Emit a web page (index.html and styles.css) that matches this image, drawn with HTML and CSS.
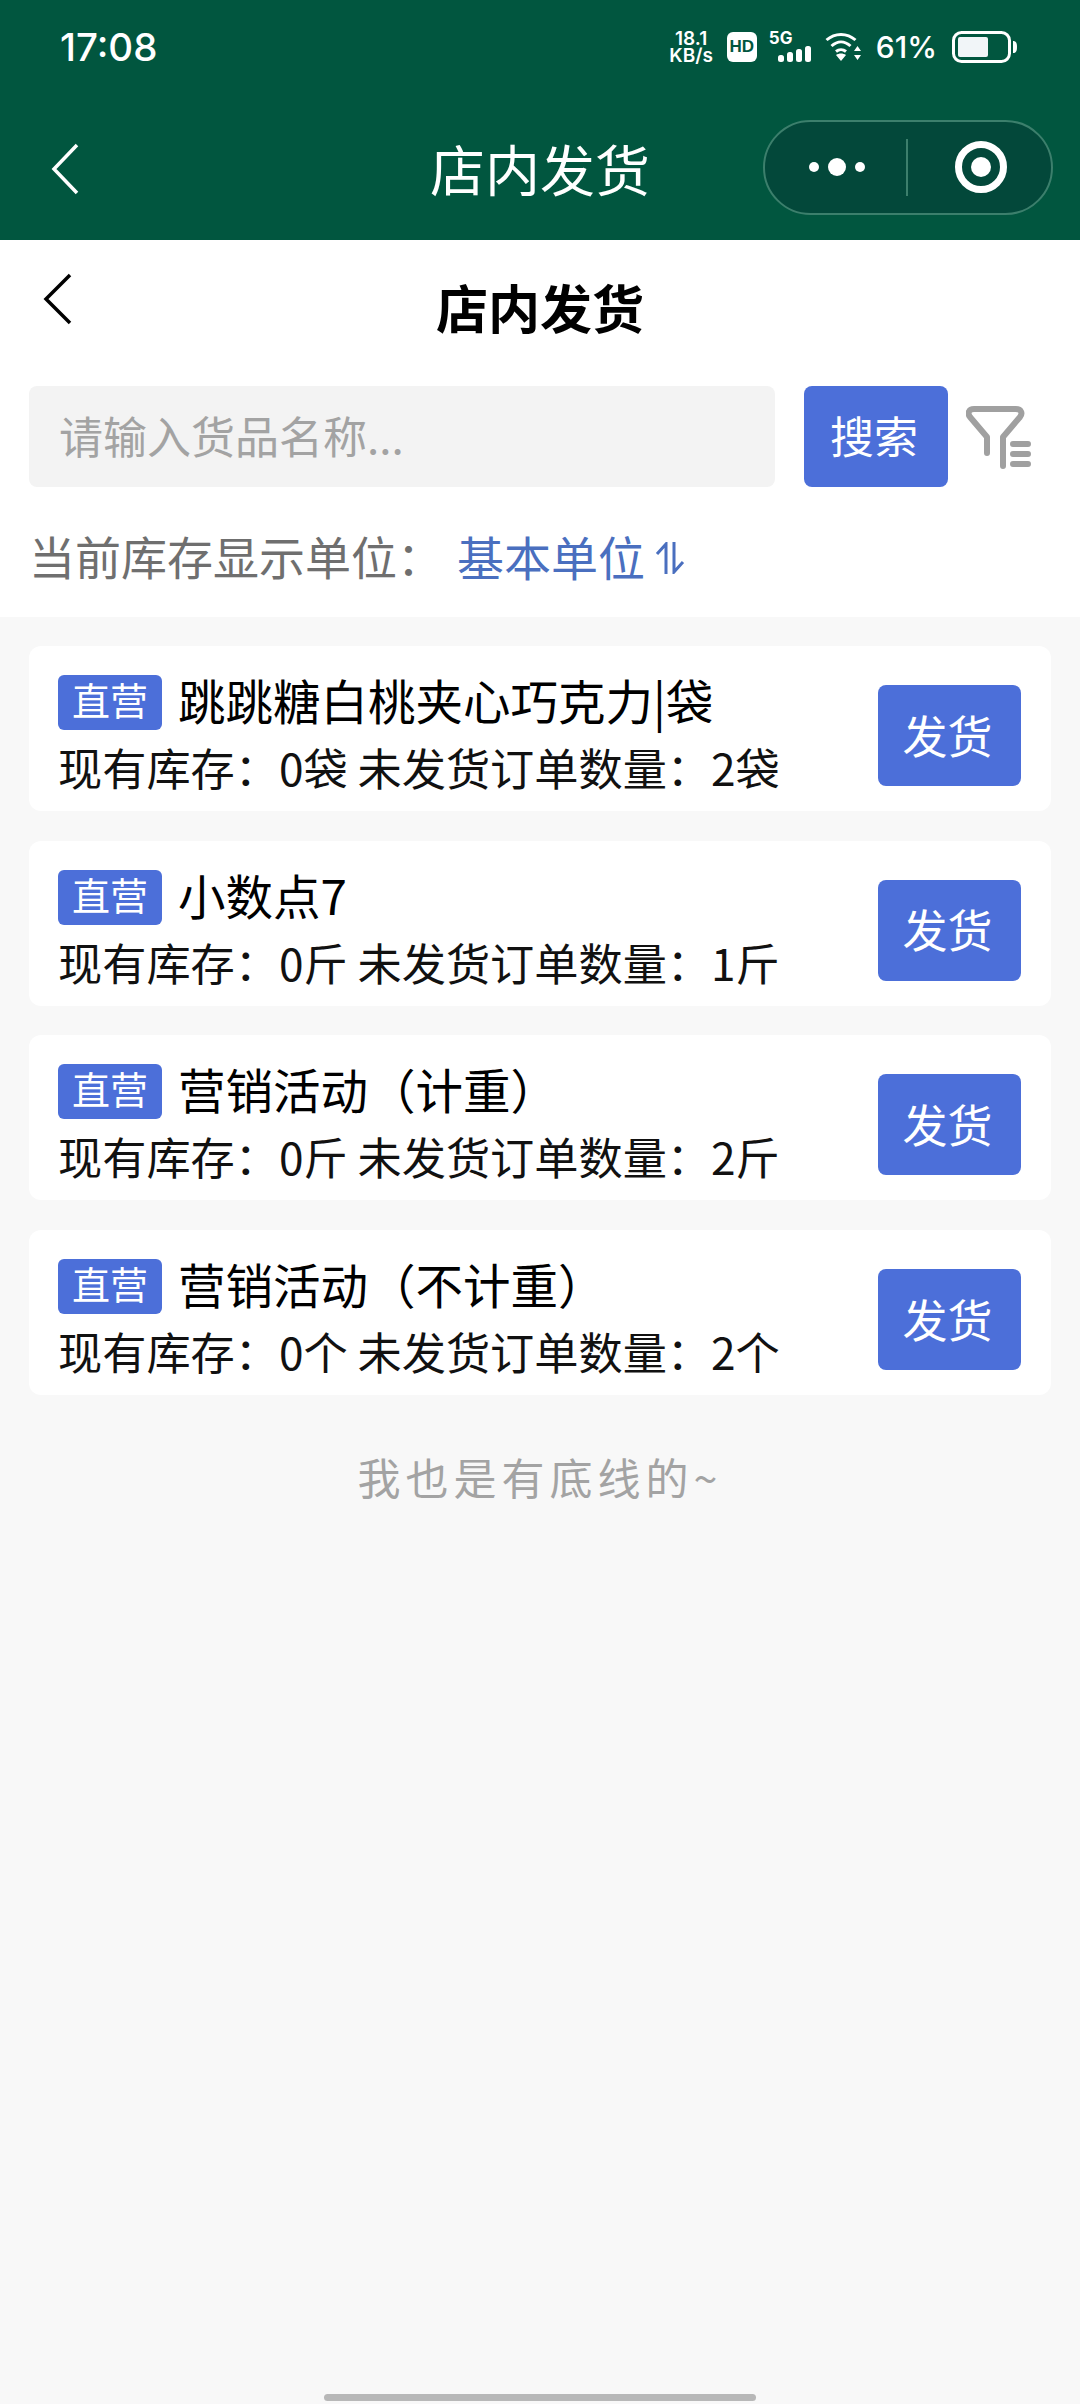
FILE: index.html
```html
<!DOCTYPE html>
<html>
<head>
    <title>店内发货</title>
    <link rel="stylesheet" href="styles.css">
</head>
<body>
    <header class="topbar">
        <div class="status">
            <span class="time">17:08</span>
            <div class="status-right">
                <div class="speed">18.1
KB/s</div>
                <div class="hd"><span>HD</span></div>
                <div class="signal">
                    <span class="five-g">5G</span>
                    <svg width="36" height="16" viewBox="0 0 36 16"><rect x="1" y="9" width="6" height="7" rx="2.500"/><rect x="10" y="6" width="6" height="10" rx="2.500"/><rect x="19" y="3" width="6" height="13" rx="2.500"/><rect x="28" y="0" width="6" height="16" rx="2.500"/></svg>
                </div>
                <svg class="wifi" width="38" height="30" viewBox="0 0 38 30">
                    <path d="M1.500 8C10 .5 22 .5 30.500 8M6.500 14C12.500 8.500 19.500 8.500 25.500 14M11 19.500C14 17 18 17 21 19.500" fill="none" stroke="#fff" stroke-width="3"/>
                    <path d="M16 29l-5-6c3-2 7-2 10 0zM32.500 14l3.500 5h-7zM32.500 28l-3.500-5h7z" fill="#fff"/>
                </svg>
                <span class="percent">61%</span>
                <svg class="battery" width="66" height="32" viewBox="0 0 66 32">
                    <rect x="1.500" y="1.500" width="56" height="29" rx="8" fill="none" stroke="#fff" stroke-width="3"/>
                    <rect x="6" y="6" width="30" height="20" rx="2" fill="#f1f5f8"/>
                    <path d="M61 10c3 0 4 2 4 6s-1 6-4 6z" fill="#fff"/>
                </svg>
            </div>
        </div>
        <div class="navbar">
            <svg class="nav-back" width="30" height="52" viewBox="0 0 30 52"><path d="M27 2L4 26l23 24" fill="none" stroke="#fff" stroke-width="3.500"/></svg>
            <h1 class="nav-title">店内发货</h1>
            <div class="capsule">
                <div class="capsule-dots"><i class="dot"></i><i class="dot dot-big"></i><i class="dot"></i></div>
                <div class="capsule-line"></div>
                <div class="capsule-ring"><i></i></div>
            </div>
        </div>
    </header>

    <section class="head">
        <div class="title-row">
            <svg class="page-back" width="30" height="52" viewBox="0 0 30 52"><path d="M28 2L4 26l24 24" fill="none" stroke="#000" stroke-width="3.500"/></svg>
            <h2 class="page-title">店内发货</h2>
        </div>
        <div class="search-row">
            <div class="search-input">请输入货品名称...</div>
            <button class="search-btn" type="button">搜索</button>
            <svg class="filter" width="66" height="64" viewBox="0 0 66 64">
                <path d="M21 47V31L4 11C1 7 3 3 8 3h42c5 0 7 4 4 8L37 31v29" fill="none" stroke="#a0a0a0" stroke-width="6" stroke-linecap="round" stroke-linejoin="round"/>
                <path d="M47 38h15M47 48h15M47 58h15" stroke="#a0a0a0" stroke-width="6" stroke-linecap="round"/>
            </svg>
        </div>
        <div class="unit-row">
            <span class="unit-label">当前库存显示单位：</span>
            <span class="unit-value">基本单位</span>
            <svg class="unit-icon" width="30" height="32" viewBox="0 0 30 32"><path d="M11 32V2L2 12M19 0v30l9-10" fill="none" stroke="#4a6fbf" stroke-width="3"/></svg>
        </div>
    </section>

    <main class="list">
        <div class="card">
            <div class="card-info">
                <div class="card-name"><span class="tag">直营</span><span class="card-title">跳跳糖白桃夹心巧克力|袋</span></div>
                <div class="card-stock">现有库存：0袋 未发货订单数量：2袋</div>
            </div>
            <button class="ship-btn" type="button">发货</button>
        </div>
        <div class="card">
            <div class="card-info">
                <div class="card-name"><span class="tag">直营</span><span class="card-title">小数点7</span></div>
                <div class="card-stock">现有库存：0斤 未发货订单数量：1斤</div>
            </div>
            <button class="ship-btn" type="button">发货</button>
        </div>
        <div class="card">
            <div class="card-info">
                <div class="card-name"><span class="tag">直营</span><span class="card-title">营销活动（计重）</span></div>
                <div class="card-stock">现有库存：0斤 未发货订单数量：2斤</div>
            </div>
            <button class="ship-btn" type="button">发货</button>
        </div>
        <div class="card">
            <div class="card-info">
                <div class="card-name"><span class="tag">直营</span><span class="card-title">营销活动（不计重）</span></div>
                <div class="card-stock">现有库存：0个 未发货订单数量：2个</div>
            </div>
            <button class="ship-btn" type="button">发货</button>
        </div>
        <p class="no-more">我也是有底线的~</p>
    </main>

    <div class="home-bar"></div>
</body>
</html>
```

FILE: styles.css
```css
html, body {
    margin: 0;
    padding: 0;
}
body {
    width: 1080px;
    height: 2404px;
    overflow: hidden;
    display: flex;
    flex-direction: column;
    background: #f8f8f8;
    font-family: "Noto Sans CJK SC", "Noto Sans", sans-serif;
}

/* green top area */
.topbar {
    height: 240px;
    background: #01563f;
    color: #fff;
}
.status {
    height: 94px;
    box-sizing: border-box;
    padding: 24px 62px 0 60px;
    display: flex;
    justify-content: space-between;
    align-items: flex-start;
}
.time {
    font-family: Inter, sans-serif;
    font-size: 38.500px;
    font-weight: 500;
    line-height: 46px;
}
.status-right {
    display: flex;
    align-items: center;
    height: 46px;
}
.speed {
    font-family: Inter, sans-serif;
    font-size: 19px;
    font-weight: 600;
    line-height: 17px;
    text-align: center;
    white-space: pre-line;
    margin-right: 14px;
}
.hd {
    width: 30px;
    height: 30px;
    background: #fff;
    border-radius: 6px;
    color: #01563f;
    font-family: "Liberation Sans", sans-serif;
    font-size: 17px;
    font-weight: 700;
    line-height: 30px;
    text-align: center;
    margin-right: 12px;
}
.signal {
    width: 44px;
    height: 32px;
    display: flex;
    flex-direction: column;
    align-items: flex-end;
    margin-right: 12px;
}
.signal svg {
    fill: #fff;
}
.five-g {
    align-self: flex-start;
    font-family: Inter, sans-serif;
    font-size: 17px;
    font-weight: 700;
    line-height: 15px;
    height: 15px;
}
.wifi {
    margin-right: 13px;
}
.percent {
    font-family: Inter, sans-serif;
    font-size: 30px;
    font-weight: 500;
    margin-right: 15px;
}
.navbar {
    height: 146px;
    display: flex;
    align-items: center;
    position: relative;
    padding: 0 27px 0 50px;
}
.nav-back {
    margin-top: 4px;
}
.nav-title {
    position: absolute;
    left: 0;
    right: 0;
    margin: 0;
    text-align: center;
    font-size: 55px;
    font-weight: 400;
}
.capsule {
    margin-left: auto;
    width: 290px;
    height: 95px;
    box-sizing: border-box;
    border: 2px solid #3c7f6c;
    border-radius: 48px;
    background: #03483a;
    display: flex;
    align-items: center;
    position: relative;
    z-index: 1;
}
.capsule-dots {
    width: 139px;
    display: flex;
    justify-content: center;
    align-items: center;
    gap: 9px;
    padding-left: 2px;
}
.dot {
    width: 10px;
    height: 10px;
    border-radius: 50%;
    background: #fff;
}
.dot-big {
    width: 18px;
    height: 18px;
}
.capsule-line {
    width: 2px;
    height: 57px;
    background: #3c7f6c;
}
.capsule-ring {
    margin-left: 47px;
    width: 52px;
    height: 52px;
    box-sizing: border-box;
    border: 7px solid #fff;
    border-radius: 50%;
    display: flex;
    align-items: center;
    justify-content: center;
}
.capsule-ring i {
    width: 20px;
    height: 20px;
    border-radius: 50%;
    background: #fff;
}

/* white header under the green bar */
.head {
    height: 377px;
    background: #fff;
    box-sizing: border-box;
    padding: 0 29px;
}
.title-row {
    height: 146px;
    display: flex;
    align-items: flex-start;
    justify-content: center;
    position: relative;
}
.page-back {
    position: absolute;
    left: 13px;
    top: 33px;
}
.page-title {
    margin: 37px 0 0;
    font-size: 52px;
    font-weight: 700;
    line-height: 60px;
    color: #000;
}
.search-row {
    display: flex;
    align-items: center;
}
.search-input {
    width: 746px;
    height: 101px;
    box-sizing: border-box;
    padding-left: 30px;
    background: #f3f3f3;
    border-radius: 8px;
    color: #a3a3a3;
    font-size: 44px;
    line-height: 98px;
}
.search-btn {
    width: 144px;
    height: 101px;
    margin-left: 29px;
    border: none;
    border-radius: 8px;
    background: #4c6fd9;
    color: #fff;
    font-family: inherit;
    font-size: 44px;
    padding: 0 4px 3px 0;
}
.filter {
    margin-left: 18px;
    margin-top: 2px;
}
.unit-row {
    display: flex;
    align-items: center;
    margin-top: 35px;
    height: 66px;
    font-size: 46px;
}
.unit-label {
    color: #6f6f6f;
}
.unit-value {
    color: #4a6fbf;
    margin-left: 14px;
    font-size: 47px;
}
.unit-icon {
    margin: 6px 0 0 10px;
}

/* list */
.list {
    flex: 1;
    padding: 29px 29px 0;
    display: flex;
    flex-direction: column;
    gap: 29.700px;
}
.card {
    height: 165px;
    flex: none;
    box-sizing: border-box;
    background: #fff;
    border-radius: 12px;
    padding: 29px 30px 0 29px;
    display: flex;
    align-items: flex-start;
    justify-content: space-between;
}
.card-name {
    display: flex;
    align-items: flex-start;
    height: 55px;
    font-size: 47.500px;
    color: #000;
}
.card-title {
    line-height: 50px;
}
.tag {
    width: 104px;
    height: 55px;
    flex: none;
    margin-right: 16px;
    background: #4c6fd9;
    border-radius: 6px;
    color: #fff;
    font-size: 38px;
    line-height: 48px;
    text-align: center;
}
.card-stock {
    margin-top: 7px;
    font-size: 44.200px;
    line-height: 60px;
    color: #111;
    white-space: pre;
}
.ship-btn {
    width: 143px;
    height: 101px;
    margin-top: 10px;
    border: none;
    border-radius: 8px;
    background: #4c6fd9;
    color: #fff;
    font-family: inherit;
    font-size: 45px;
    padding: 0 4px 3px 0;
}
.no-more {
    margin: 21px 0 0;
    text-align: center;
    color: #a3a3a3;
    font-size: 43px;
    line-height: 60px;
    letter-spacing: 5px;
}
.home-bar {
    position: absolute;
    left: 324px;
    top: 2394px;
    width: 432px;
    height: 7px;
    border-radius: 4px;
    background: #b8b8b8;
}
```
